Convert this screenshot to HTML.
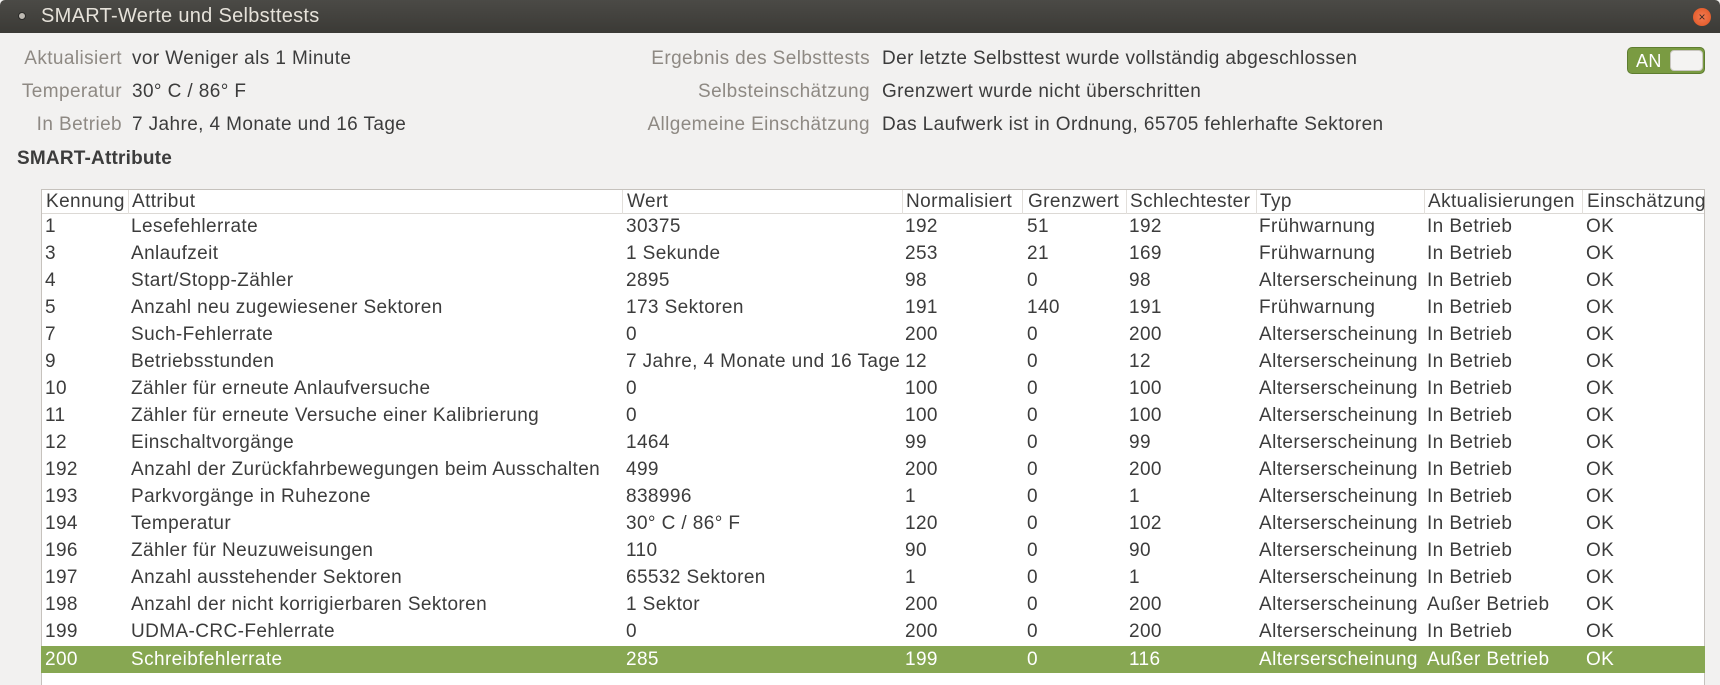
<!DOCTYPE html>
<html><head><meta charset="utf-8"><style>
*{margin:0;padding:0;box-sizing:border-box}
html{width:1720px;height:685px;overflow:hidden}
body{width:1720px;height:685px;overflow:hidden;background:#f2f1f0;font-family:"Liberation Sans",sans-serif;font-size:19px;letter-spacing:0.4px;color:#3c3c3c;position:relative}
.tb{position:absolute;left:0;top:0;width:1720px;height:33px;background:linear-gradient(#4b4a46,#3b3a36);border-radius:5px 5px 0 0}
.tb .t{position:absolute;left:41px;top:5px;color:#e6e2da;font-size:20px;letter-spacing:0.3px}
.dot{position:absolute;left:18px;top:12px;width:8px;height:8px;border-radius:50%;background:#bdb9b2;border:1px solid #2a2a28}
.cls{position:absolute;left:1693px;top:8px;width:18px;height:18px;border-radius:50%;background:radial-gradient(#f27b53,#e0531f);color:#3b2a22;font-size:12px;line-height:18px;text-align:center;letter-spacing:0}
.l{position:absolute;color:#8e8983;text-align:right;white-space:nowrap}
.v{position:absolute;white-space:nowrap}
.h{position:absolute;left:17px;top:148px;font-weight:bold;font-size:19px;letter-spacing:0.2px}
.sw{position:absolute;left:1627px;top:47px;width:78px;height:27px;border-radius:5px;background:#7a9b42;border:1px solid #5e7d30}
.sw span{position:absolute;left:8px;top:3px;color:#fff;font-size:18px}
.sw i{position:absolute;left:42px;top:2px;width:33px;height:21px;border-radius:4px;background:#f4f3f2;border:1px solid #c9c6c0}
.tbl{position:absolute;left:41px;top:189px;width:1664px;height:496px;background:#fff;border:1px solid #c6c2bd;border-bottom:none}
.hd{position:absolute;left:0;top:0;width:100%;height:24px;border-bottom:1px solid #dcd9d5}
.c{position:absolute;white-space:nowrap;line-height:27px}
.hd .c{line-height:23px}
.dv{position:absolute;top:0;width:1px;height:24px;background:#e2dfdb}
.r{position:absolute;left:0;width:100%;height:27px}
.sel{background:#87a752;color:#fff}
</style></head><body>
<div class="tb"><div class="dot"></div><div class="t">SMART-Werte und Selbsttests</div><div class="cls">×</div></div>
<div class="l" style="right:1598px;top:48px">Aktualisiert</div><div class="v" style="left:132px;top:48px">vor Weniger als 1 Minute</div>
<div class="l" style="right:1598px;top:81px">Temperatur</div><div class="v" style="left:132px;top:81px">30° C / 86° F</div>
<div class="l" style="right:1598px;top:114px">In Betrieb</div><div class="v" style="left:132px;top:114px">7 Jahre, 4 Monate und 16 Tage</div>
<div class="l" style="right:850px;top:48px">Ergebnis des Selbsttests</div><div class="v" style="left:882px;top:48px">Der letzte Selbsttest wurde vollständig abgeschlossen</div>
<div class="l" style="right:850px;top:81px">Selbsteinschätzung</div><div class="v" style="left:882px;top:81px">Grenzwert wurde nicht überschritten</div>
<div class="l" style="right:850px;top:114px">Allgemeine Einschätzung</div><div class="v" style="left:882px;top:114px">Das Laufwerk ist in Ordnung, 65705 fehlerhafte Sektoren</div>
<div class="sw"><span>AN</span><i></i></div>
<div class="h">SMART-Attribute</div>
<div class="tbl">
<div class="hd">
<div class="c" style="left:4px">Kennung</div><div class="dv" style="left:86px"></div>
<div class="c" style="left:90px">Attribut</div><div class="dv" style="left:580px"></div>
<div class="c" style="left:585px">Wert</div><div class="dv" style="left:860px"></div>
<div class="c" style="left:864px">Normalisiert</div><div class="dv" style="left:980px"></div>
<div class="c" style="left:986px">Grenzwert</div><div class="dv" style="left:1084px"></div>
<div class="c" style="left:1088px">Schlechtester</div><div class="dv" style="left:1214px"></div>
<div class="c" style="left:1218px">Typ</div><div class="dv" style="left:1382px"></div>
<div class="c" style="left:1386px">Aktualisierungen</div><div class="dv" style="left:1540px"></div>
<div class="c" style="left:1545px">Einschätzung</div>
</div>
</div>
<div style="position:absolute;left:41px;top:213px;width:1664px">
<div class="r" style="top:0"><div class="c" style="left:4px">1</div><div class="c" style="left:90px">Lesefehlerrate</div><div class="c" style="left:585px">30375</div><div class="c" style="left:864px">192</div><div class="c" style="left:986px">51</div><div class="c" style="left:1088px">192</div><div class="c" style="left:1218px">Frühwarnung</div><div class="c" style="left:1386px">In Betrieb</div><div class="c" style="left:1545px">OK</div></div>
<div class="r" style="top:27px"><div class="c" style="left:4px">3</div><div class="c" style="left:90px">Anlaufzeit</div><div class="c" style="left:585px">1 Sekunde</div><div class="c" style="left:864px">253</div><div class="c" style="left:986px">21</div><div class="c" style="left:1088px">169</div><div class="c" style="left:1218px">Frühwarnung</div><div class="c" style="left:1386px">In Betrieb</div><div class="c" style="left:1545px">OK</div></div>
<div class="r" style="top:54px"><div class="c" style="left:4px">4</div><div class="c" style="left:90px">Start/Stopp-Zähler</div><div class="c" style="left:585px">2895</div><div class="c" style="left:864px">98</div><div class="c" style="left:986px">0</div><div class="c" style="left:1088px">98</div><div class="c" style="left:1218px">Alterserscheinung</div><div class="c" style="left:1386px">In Betrieb</div><div class="c" style="left:1545px">OK</div></div>
<div class="r" style="top:81px"><div class="c" style="left:4px">5</div><div class="c" style="left:90px">Anzahl neu zugewiesener Sektoren</div><div class="c" style="left:585px">173 Sektoren</div><div class="c" style="left:864px">191</div><div class="c" style="left:986px">140</div><div class="c" style="left:1088px">191</div><div class="c" style="left:1218px">Frühwarnung</div><div class="c" style="left:1386px">In Betrieb</div><div class="c" style="left:1545px">OK</div></div>
<div class="r" style="top:108px"><div class="c" style="left:4px">7</div><div class="c" style="left:90px">Such-Fehlerrate</div><div class="c" style="left:585px">0</div><div class="c" style="left:864px">200</div><div class="c" style="left:986px">0</div><div class="c" style="left:1088px">200</div><div class="c" style="left:1218px">Alterserscheinung</div><div class="c" style="left:1386px">In Betrieb</div><div class="c" style="left:1545px">OK</div></div>
<div class="r" style="top:135px"><div class="c" style="left:4px">9</div><div class="c" style="left:90px">Betriebsstunden</div><div class="c" style="left:585px">7 Jahre, 4 Monate und 16 Tage</div><div class="c" style="left:864px">12</div><div class="c" style="left:986px">0</div><div class="c" style="left:1088px">12</div><div class="c" style="left:1218px">Alterserscheinung</div><div class="c" style="left:1386px">In Betrieb</div><div class="c" style="left:1545px">OK</div></div>
<div class="r" style="top:162px"><div class="c" style="left:4px">10</div><div class="c" style="left:90px">Zähler für erneute Anlaufversuche</div><div class="c" style="left:585px">0</div><div class="c" style="left:864px">100</div><div class="c" style="left:986px">0</div><div class="c" style="left:1088px">100</div><div class="c" style="left:1218px">Alterserscheinung</div><div class="c" style="left:1386px">In Betrieb</div><div class="c" style="left:1545px">OK</div></div>
<div class="r" style="top:189px"><div class="c" style="left:4px">11</div><div class="c" style="left:90px">Zähler für erneute Versuche einer Kalibrierung</div><div class="c" style="left:585px">0</div><div class="c" style="left:864px">100</div><div class="c" style="left:986px">0</div><div class="c" style="left:1088px">100</div><div class="c" style="left:1218px">Alterserscheinung</div><div class="c" style="left:1386px">In Betrieb</div><div class="c" style="left:1545px">OK</div></div>
<div class="r" style="top:216px"><div class="c" style="left:4px">12</div><div class="c" style="left:90px">Einschaltvorgänge</div><div class="c" style="left:585px">1464</div><div class="c" style="left:864px">99</div><div class="c" style="left:986px">0</div><div class="c" style="left:1088px">99</div><div class="c" style="left:1218px">Alterserscheinung</div><div class="c" style="left:1386px">In Betrieb</div><div class="c" style="left:1545px">OK</div></div>
<div class="r" style="top:243px"><div class="c" style="left:4px">192</div><div class="c" style="left:90px">Anzahl der Zurückfahrbewegungen beim Ausschalten</div><div class="c" style="left:585px">499</div><div class="c" style="left:864px">200</div><div class="c" style="left:986px">0</div><div class="c" style="left:1088px">200</div><div class="c" style="left:1218px">Alterserscheinung</div><div class="c" style="left:1386px">In Betrieb</div><div class="c" style="left:1545px">OK</div></div>
<div class="r" style="top:270px"><div class="c" style="left:4px">193</div><div class="c" style="left:90px">Parkvorgänge in Ruhezone</div><div class="c" style="left:585px">838996</div><div class="c" style="left:864px">1</div><div class="c" style="left:986px">0</div><div class="c" style="left:1088px">1</div><div class="c" style="left:1218px">Alterserscheinung</div><div class="c" style="left:1386px">In Betrieb</div><div class="c" style="left:1545px">OK</div></div>
<div class="r" style="top:297px"><div class="c" style="left:4px">194</div><div class="c" style="left:90px">Temperatur</div><div class="c" style="left:585px">30° C / 86° F</div><div class="c" style="left:864px">120</div><div class="c" style="left:986px">0</div><div class="c" style="left:1088px">102</div><div class="c" style="left:1218px">Alterserscheinung</div><div class="c" style="left:1386px">In Betrieb</div><div class="c" style="left:1545px">OK</div></div>
<div class="r" style="top:324px"><div class="c" style="left:4px">196</div><div class="c" style="left:90px">Zähler für Neuzuweisungen</div><div class="c" style="left:585px">110</div><div class="c" style="left:864px">90</div><div class="c" style="left:986px">0</div><div class="c" style="left:1088px">90</div><div class="c" style="left:1218px">Alterserscheinung</div><div class="c" style="left:1386px">In Betrieb</div><div class="c" style="left:1545px">OK</div></div>
<div class="r" style="top:351px"><div class="c" style="left:4px">197</div><div class="c" style="left:90px">Anzahl ausstehender Sektoren</div><div class="c" style="left:585px">65532 Sektoren</div><div class="c" style="left:864px">1</div><div class="c" style="left:986px">0</div><div class="c" style="left:1088px">1</div><div class="c" style="left:1218px">Alterserscheinung</div><div class="c" style="left:1386px">In Betrieb</div><div class="c" style="left:1545px">OK</div></div>
<div class="r" style="top:378px"><div class="c" style="left:4px">198</div><div class="c" style="left:90px">Anzahl der nicht korrigierbaren Sektoren</div><div class="c" style="left:585px">1 Sektor</div><div class="c" style="left:864px">200</div><div class="c" style="left:986px">0</div><div class="c" style="left:1088px">200</div><div class="c" style="left:1218px">Alterserscheinung</div><div class="c" style="left:1386px">Außer Betrieb</div><div class="c" style="left:1545px">OK</div></div>
<div class="r" style="top:405px"><div class="c" style="left:4px">199</div><div class="c" style="left:90px">UDMA-CRC-Fehlerrate</div><div class="c" style="left:585px">0</div><div class="c" style="left:864px">200</div><div class="c" style="left:986px">0</div><div class="c" style="left:1088px">200</div><div class="c" style="left:1218px">Alterserscheinung</div><div class="c" style="left:1386px">In Betrieb</div><div class="c" style="left:1545px">OK</div></div>
<div class="r sel" style="top:433px"><div class="c" style="left:4px">200</div><div class="c" style="left:90px">Schreibfehlerrate</div><div class="c" style="left:585px">285</div><div class="c" style="left:864px">199</div><div class="c" style="left:986px">0</div><div class="c" style="left:1088px">116</div><div class="c" style="left:1218px">Alterserscheinung</div><div class="c" style="left:1386px">Außer Betrieb</div><div class="c" style="left:1545px">OK</div></div>
</div>
</body></html>
